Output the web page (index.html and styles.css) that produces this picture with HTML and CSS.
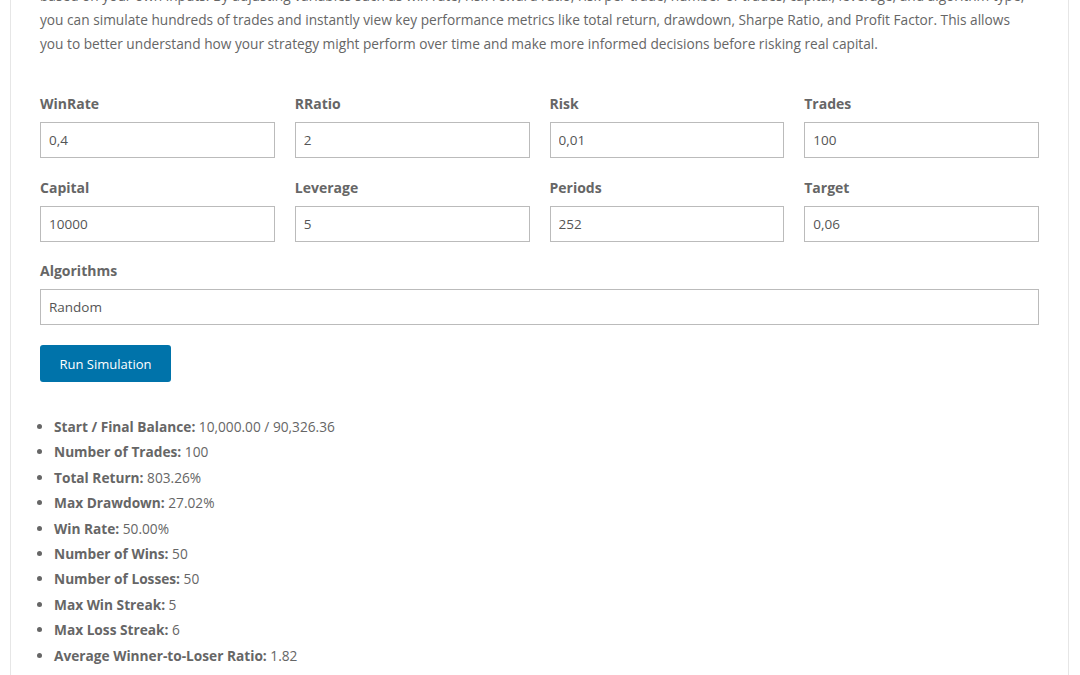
FILE: index.html
```html
<!DOCTYPE html>
<html>
<head>
<meta charset="utf-8">
<link rel="stylesheet" href="styles.css">
</head>
<body>
<div class="page">
  <p class="intro">based on your own inputs. By adjusting variables such as win rate, risk-reward ratio, risk per trade, number of trades, capital, leverage, and algorithm type,<br>you can simulate hundreds of trades and instantly view key performance metrics like total return, drawdown, Sharpe Ratio, and Profit Factor. This allows<br>you to better understand how your strategy might perform over time and make more informed decisions before risking real capital.</p>

  <form class="sim-form">
    <div class="grid">
      <label class="field"><span class="label">WinRate</span><input type="text" value="0,4"></label>
      <label class="field"><span class="label">RRatio</span><input type="text" value="2"></label>
      <label class="field"><span class="label">Risk</span><input type="text" value="0,01"></label>
      <label class="field"><span class="label">Trades</span><input type="text" value="100"></label>
      <label class="field"><span class="label">Capital</span><input type="text" value="10000"></label>
      <label class="field"><span class="label">Leverage</span><input type="text" value="5"></label>
      <label class="field"><span class="label">Periods</span><input type="text" value="252"></label>
      <label class="field"><span class="label">Target</span><input type="text" value="0,06"></label>
      <label class="field wide"><span class="label">Algorithms</span><input type="text" value="Random"></label>
    </div>
    <button type="button" class="run">Run Simulation</button>
  </form>

  <ul class="results">
    <li><b>Start / Final Balance:</b> 10,000.00 / 90,326.36</li>
    <li><b>Number of Trades:</b> 100</li>
    <li><b>Total Return:</b> 803.26%</li>
    <li><b>Max Drawdown:</b> 27.02%</li>
    <li><b>Win Rate:</b> 50.00%</li>
    <li><b>Number of Wins:</b> 50</li>
    <li><b>Number of Losses:</b> 50</li>
    <li><b>Max Win Streak:</b> 5</li>
    <li><b>Max Loss Streak:</b> 6</li>
    <li><b>Average Winner-to-Loser Ratio:</b> 1.82</li>
  </ul>
</div>
</body>
</html>
```

FILE: styles.css
```css
html, body {
  margin: 0;
  padding: 0;
  background: #fff;
  overflow: hidden;
}
body {
  font-family: "Open Sans", "Liberation Sans", sans-serif;
  font-size: 13.7px;
  color: #666;
}
.page {
  margin: -16px 11px 0 10px;
  border-left: 1px solid #e6e6e6;
  border-right: 1px solid #e6e6e6;
  padding: 0 29px 40px 29px;
  min-height: 720px;
}
.intro {
  margin: 0;
  line-height: 24px;
  white-space: nowrap;
}
.sim-form {
  margin-top: 38px;
}
.grid {
  display: grid;
  grid-template-columns: repeat(4, 1fr);
  column-gap: 20px;
  row-gap: 19.5px;
}
.field {
  display: flex;
  flex-direction: column;
}
.field.wide {
  grid-column: 1 / -1;
}
.label {
  font-weight: 700;
  font-size: 14px;
  line-height: 20px;
  margin-bottom: 8px;
  color: #666;
}
.field input {
  height: 36px;
  box-sizing: border-box;
  border: 1px solid #bbb;
  border-radius: 0;
  padding: 0 8px;
  font-family: "Open Sans", "Liberation Sans", sans-serif;
  font-size: 13.5px;
  color: #555;
  background: #fff;
  outline: none;
}
.run {
  margin-top: 20px;
  height: 37px;
  width: 131px;
  padding: 0;
  background: #0073aa;
  color: #fff;
  border: none;
  border-radius: 3px;
  font-family: "Open Sans", "Liberation Sans", sans-serif;
  font-size: 13px;
  font-weight: 500;
  cursor: pointer;
}
.results {
  margin: 32px 0 0 0;
  padding: 0 0 0 14px;
  list-style: disc;
  font-size: 13.7px;
  line-height: 25.4px;
}
.results b {
  font-weight: 700;
}
```
